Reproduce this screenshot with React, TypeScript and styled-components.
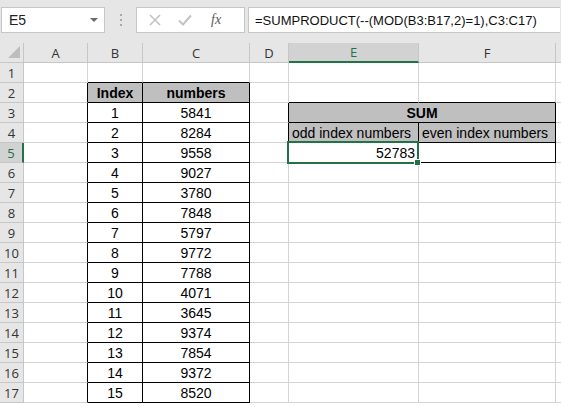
import React from "react";
import styled, { createGlobalStyle, css } from "styled-components";

const GlobalStyle = createGlobalStyle`
  html, body {
    margin: 0;
    padding: 0;
    background: #ffffff;
  }
  body {
    font-family: "Liberation Sans", Arial, sans-serif;
  }
`;

const GREEN = "#217346";
const GRID = "#d4d4d4";
const HEAD_LINE = "#c6c6c6";

const Page = styled.div`
  width: 561px;
  height: 407px;
  overflow: hidden;
  background: #fff;
`;

const TopBand = styled.div`
  height: 43px;
  background: #e6e6e6;
  display: flex;
  align-items: flex-start;
  padding-top: 7px;
  box-sizing: border-box;
`;

const NameBox = styled.div`
  margin-left: 1px;
  width: 104px;
  height: 26px;
  box-sizing: border-box;
  background: #fff;
  border: 1px solid #c6c6c6;
  display: flex;
  align-items: center;
  justify-content: space-between;
  padding: 0 6px 0 7px;
  font-size: 14px;
  color: #222;
`;

const DropArrow = styled.span`
  width: 0;
  height: 0;
  border-left: 4px solid transparent;
  border-right: 4px solid transparent;
  border-top: 4px solid #6a6a6a;
`;

const Dots = styled.div`
  width: 31px;
  display: flex;
  flex-direction: column;
  align-items: center;
  gap: 3px;
  padding-top: 7px;
  span {
    width: 2px;
    height: 2px;
    background: #a8a8a8;
  }
`;

const FxBox = styled.div`
  width: 109px;
  height: 26px;
  box-sizing: border-box;
  background: #fff;
  border: 1px solid #c6c6c6;
  display: flex;
  align-items: center;
  padding-left: 12px;
  gap: 17px;
`;

const FxText = styled.span`
  font-family: "Liberation Serif", "Times New Roman", serif;
  font-style: italic;
  font-size: 14px;
  color: #5a5a5a;
  margin-left: 2px;
`;

const FormulaInput = styled.div`
  margin-left: 3px;
  width: 312px;
  height: 26px;
  box-sizing: border-box;
  background: #fff;
  border: 1px solid #c6c6c6;
  border-right: none;
  display: flex;
  align-items: center;
  padding-left: 6px;
  font-size: 13px;
  color: #111;
  white-space: nowrap;
`;

const Sheet = styled.div`
  display: grid;
  grid-template-columns: 24px 64px 55px 107px 39px 130px 137px 1fr;
  grid-auto-rows: 20px;
`;

const Corner = styled.div`
  background: #e6e6e6;
  box-sizing: border-box;
  border-right: 1px solid ${HEAD_LINE};
  border-bottom: 1px solid ${HEAD_LINE};
  display: flex;
  align-items: flex-end;
  justify-content: flex-end;
  padding: 0 3px 4px 0;
`;

const ColHead = styled.div<{ $active?: boolean }>`
  background: ${(p) => (p.$active ? "#d2d2d2" : "#e6e6e6")};
  color: ${(p) => (p.$active ? GREEN : "#333")};
  box-sizing: border-box;
  border-right: 1px solid ${HEAD_LINE};
  border-bottom: ${(p) => (p.$active ? `2px solid ${GREEN}` : `1px solid ${HEAD_LINE}`)};
  display: flex;
  align-items: center;
  justify-content: center;
  font-family: "Open Sans", "Liberation Sans", sans-serif;
  font-size: 13px;
  overflow: hidden;
`;

const RowHead = styled.div<{ $active?: boolean }>`
  background: ${(p) => (p.$active ? "#d2d2d2" : "#e6e6e6")};
  color: ${(p) => (p.$active ? GREEN : "#333")};
  box-sizing: border-box;
  border-right: ${(p) => (p.$active ? `2px solid ${GREEN}` : `1px solid ${HEAD_LINE}`)};
  border-bottom: 1px solid ${HEAD_LINE};
  display: flex;
  align-items: center;
  justify-content: center;
  font-family: "Open Sans", "Liberation Sans", sans-serif;
  font-size: 13px;
`;

const Cell = styled.div<{
  $right: string;
  $bottom: string;
  $fill?: string;
  $bold?: boolean;
  $align?: "left" | "center" | "right";
  $span?: number;
}>`
  position: relative;
  box-sizing: border-box;
  border-right: 1px solid ${(p) => p.$right};
  border-bottom: 1px solid ${(p) => p.$bottom};
  background: ${(p) => p.$fill || "#fff"};
  font-size: 14px;
  font-weight: ${(p) => (p.$bold ? 700 : 400)};
  color: #000;
  display: flex;
  align-items: flex-end;
  padding: 0 3px 1px 3px;
  white-space: nowrap;
  overflow: visible;
  justify-content: ${(p) =>
    p.$align === "center" ? "center" : p.$align === "right" ? "flex-end" : "flex-start"};
  ${(p) =>
    p.$span &&
    css`
      grid-column: span ${p.$span};
    `}
`;

const Selection = styled.div`
  position: absolute;
  z-index: 2;
  left: -2px;
  top: -2px;
  width: 132px;
  height: 23px;
  box-sizing: border-box;
  border: 2px solid ${GREEN};
  pointer-events: none;
`;

const Handle = styled.div`
  position: absolute;
  left: 125px;
  top: 16px;
  width: 7px;
  height: 7px;
  box-sizing: border-box;
  background: ${GREEN};
  border: 1px solid #fff;
`;

const COLS = ["A", "B", "C", "D", "E", "F", ""];
const NUMBERS = [
  5841, 8284, 9558, 9027, 3780, 7848, 5797, 9772, 7788, 4071, 3645, 9374, 7854,
  9372, 8520,
];
const FILL = "#bfbfbf";

const boxed = (c: number, r: number) =>
  ((c === 1 || c === 2) && r >= 2 && r <= 17) ||
  ((c === 4 || c === 5) && r >= 3 && r <= 5);

const rightColor = (c: number, r: number) =>
  boxed(c, r) || boxed(c + 1, r) ? "#000" : GRID;
const bottomColor = (c: number, r: number) =>
  boxed(c, r) || boxed(c, r + 1) ? "#000" : GRID;

function cellContent(c: number, r: number) {
  if (c === 1 && r === 2) return { text: "Index", bold: true, fill: FILL, align: "center" as const };
  if (c === 2 && r === 2) return { text: "numbers", bold: true, fill: FILL, align: "center" as const };
  if (c === 1 && r >= 3) return { text: String(r - 2), align: "center" as const };
  if (c === 2 && r >= 3) return { text: String(NUMBERS[r - 3]), align: "center" as const };
  if (c === 4 && r === 4) return { text: "odd index numbers", fill: FILL };
  if (c === 5 && r === 4) return { text: "even index numbers", fill: FILL };
  if (c === 4 && r === 5) return { text: "52783", align: "right" as const };
  return { text: "" };
}

function CrossIcon() {
  return (
    <svg width="12" height="12" viewBox="0 0 12 12">
      <path d="M1 1L11 11M11 1L1 11" stroke="#c3c3c3" strokeWidth="1.6" />
    </svg>
  );
}

function CheckIcon() {
  return (
    <svg width="14" height="12" viewBox="0 0 14 12">
      <path d="M1 6.5L5 10.5L13 1.5" stroke="#c3c3c3" strokeWidth="2" fill="none" />
    </svg>
  );
}

function CornerTriangle() {
  return (
    <svg width="12" height="12" viewBox="0 0 12 12">
      <polygon points="12,0 12,12 0,12" fill="#bdbdbd" />
    </svg>
  );
}

export default function App() {
  const rows: React.ReactNode[] = [];
  for (let r = 1; r <= 17; r++) {
    rows.push(
      <RowHead key={`h${r}`} $active={r === 5}>
        {r}
      </RowHead>
    );
    for (let c = 0; c < COLS.length; c++) {
      if (r === 3 && c === 4) {
        rows.push(
          <Cell key={`${c}-${r}`} $right="#000" $bottom="#000" $fill={FILL} $bold $align="center" $span={2}>
            SUM
          </Cell>
        );
        continue;
      }
      if (r === 3 && c === 5) continue;
      const info = cellContent(c, r);
      rows.push(
        <Cell
          key={`${c}-${r}`}
          $right={rightColor(c, r)}
          $bottom={bottomColor(c, r)}
          $fill={info.fill}
          $bold={info.bold}
          $align={info.align}
        >
          {info.text}
          {c === 4 && r === 5 && (
            <Selection>
              <Handle />
            </Selection>
          )}
        </Cell>
      );
    }
  }

  return (
    <>
      <GlobalStyle />
      <Page>
        <TopBand>
          <NameBox>
            <span>E5</span>
            <DropArrow />
          </NameBox>
          <Dots>
            <span />
            <span />
            <span />
          </Dots>
          <FxBox>
            <CrossIcon />
            <CheckIcon />
            <FxText>fx</FxText>
          </FxBox>
          <FormulaInput>=SUMPRODUCT(--(MOD(B3:B17,2)=1),C3:C17)</FormulaInput>
        </TopBand>
        <Sheet>
          <Corner>
            <CornerTriangle />
          </Corner>
          {COLS.map((col, i) => (
            <ColHead key={i} $active={col === "E"}>
              {col}
            </ColHead>
          ))}
          {rows}
        </Sheet>
      </Page>
    </>
  );
}
